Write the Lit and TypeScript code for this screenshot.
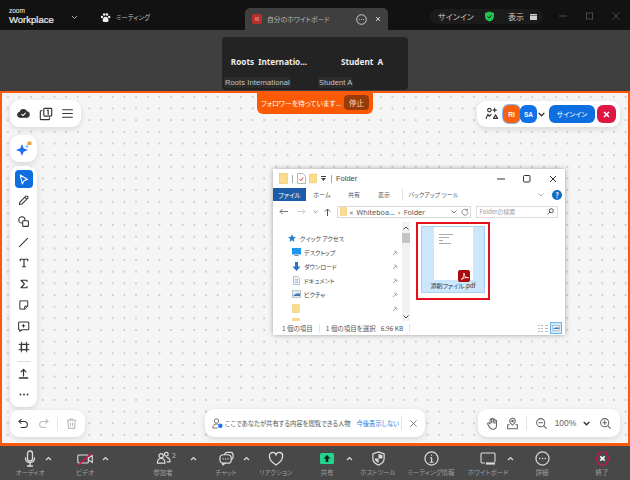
import { LitElement, html, css, svg } from "lit";
import { customElement } from "lit/decorators.js";

const ic = (body: unknown, w = 16, h = 16, vb = "0 0 16 16") =>
  html`<svg width=${w} height=${h} viewBox=${vb} fill="none" stroke="currentColor" stroke-width="1.3" stroke-linecap="round" stroke-linejoin="round">${body}</svg>`;

const folder = (w = 9, h = 11) =>
  html`<svg width=${w} height=${h} viewBox="0 0 9 11"><rect x="0.5" y="0.5" width="8" height="10" fill="#fbdc8c" stroke="#e8c264" stroke-width="0.6"/></svg>`;

const bottom = [
  { label: "オーディオ", gap: 15, w: 30, icon: ic(svg`<rect x="4.500" y="1" width="5" height="10" rx="2.500"/><path d="M2.500 8c0 3 2 4.500 4.500 4.500S11.500 11 11.500 8M7 12.500v3M4.500 16h5"/>`, 14, 17, "0 0 14 17") },
  { label: "ビデオ", gap: 25, w: 30, icon: html`<svg width="17" height="14" viewBox="0 0 17 14" fill="none" stroke="currentColor" stroke-width="1.100"><rect x=".8" y="3" width="10.500" height="8" rx="1"/><path d="M11.500 6l3.800-2.500v7L11.500 8z"/><path d="M1.500 13L15 1" stroke="#e0104f" stroke-width="1.500"/></svg>` },
  { label: "参加者", gap: 45.5, w: 35, icon: ic(svg`<circle cx="5.500" cy="5" r="2.300"/><circle cx="11" cy="3.500" r="2"/><path d="M1.500 13c0-3 1.500-5 4-5s4 2 4 5zM11.500 7c2 0 3.500 1.500 3.500 4.500h-3"/>`, 15, 15) },
  { label: "チャット", gap: 30.5, w: 30, icon: ic(svg`<path d="M6 3.500A3 3 0 0 1 9 1.500h3.500a2.500 2.500 0 0 1 2.500 2.500v2.500A2.500 2.500 0 0 1 13.500 9"/><rect x="1" y="4" width="12" height="9" rx="3.500"/><path d="M4 13v2l2.500-2"/><path d="M4.500 8.500h.1M7 8.500h.1M9.500 8.500h.1"/>`, 15, 15) },
  { label: "リアクション", gap: 17, w: 36, icon: ic(svg`<path d="M8 14S1.500 10 1.500 5.500A3.300 3.300 0 0 1 8 4a3.300 3.300 0 0 1 6.500 1.500C14.500 10 8 14 8 14z"/>`, 16, 16) },
  { label: "共有", gap: 26, w: 14, icon: html`<svg width="14" height="11" viewBox="0 0 14 11"><rect width="14" height="11" rx="1.500" fill="#22d48b"/><path d="M7 2l3.500 3.500H8.300V9H5.700V5.500H3.500z" fill="#10231b"/></svg>` },
  { label: "ホストツール", gap: 26, w: 36, icon: ic(svg`<path d="M8 1l6 2v5c0 3.500-3 5.800-6 7-3-1.200-6-3.500-6-7V3z"/><path d="M8 3v5H3.800c.2 2 2 3.700 4.200 4.700V8h4.200V4.500z" fill="currentColor" stroke="none"/>`, 15, 15) },
  { label: "ミーティング情報", gap: 11, w: 48, icon: ic(svg`<circle cx="8" cy="8" r="7"/><path d="M8 4.500h.1M7 7.200h1.100V12M6.500 12h3.200"/>`, 15, 15) },
  { label: "ホワイトボード", gap: 12, w: 42, icon: html`<svg width="16" height="14" viewBox="0 0 16 14" fill="none" stroke="currentColor" stroke-width="1.100"><path d="M5 11H2a1 1 0 0 1-1-1V2a1 1 0 0 1 1-1h12a1 1 0 0 1 1 1v8"/><path d="M6 11.500h9" stroke-width="2.200"/></svg>` },
  { label: "詳細", gap: 24, w: 18, icon: ic(svg`<circle cx="8" cy="8" r="7"/><path d="M5 8h.1M8 8h.1M11 8h.1" stroke-width="1.600"/>`, 15, 15) },
  { label: "終了", gap: 42, w: 18, icon: html`<svg width="15" height="15" viewBox="0 0 15 15" fill="none"><path d="M4.500 1h6l3.500 6.500-3.500 6.500h-6L1 7.500z" stroke="#d8104e" stroke-width="1.200"/><path d="M5.300 5.300l4.400 4.400M9.700 5.300l-4.400 4.400" stroke="#f2f2f2" stroke-width="1.800"/></svg>` },
];
const carets = [45, 102, 190, 243, 346, 507];
const tabs = [["ホーム", 32], ["共有", 32], ["表示", 28], ["バックアップ ツール", 62]] as const;

@customElement("app-root")
export class AppRoot extends LitElement {
  static styles = css`
    :host { display: block; width: 630px; height: 480px; overflow: hidden; background: #3f3f3f; font-family: "Noto Sans CJK JP", "Liberation Sans", sans-serif; font-feature-settings: "palt"; color: #fff; }
    * { box-sizing: border-box; }
    svg { display: block; flex: none; }
    .top { height: 30px; background: #121212; display: flex; align-items: flex-start; position: relative; }
    .brand { width: 62px; margin-left: 9px; padding-top: 8px; display: flex; flex-direction: column; font-family: "Liberation Sans", sans-serif; }
    .brand b { font-size: 6.500px; font-weight: 400; line-height: 6px; }
    .brand span { font-size: 9.500px; line-height: 11px; color: #f0f0f0; -webkit-text-stroke: .2px #f0f0f0; }
    .chev { margin-top: 15px; color: #aaa; }
    .meet { margin: 12px 0 0 22px; display: flex; gap: 5px; align-items: center; font-size: 6.500px; color: #c0c0c0; line-height: 11px; }
    .tab { position: absolute; left: 245px; top: 8px; width: 143px; height: 22px; background: #3f3f3f; border-radius: 5px 5px 0 0; display: flex; align-items: center; padding: 0 7px; font-size: 6.800px; color: #b5b5b5; }
    .avatar-s { width: 10px; height: 10px; background: #b8302c; border-radius: 2px; font-size: 4.500px; display: grid; place-items: center; color: #f2c0c0; margin-right: 5px; }
    .tab .t { flex: 1; white-space: nowrap; }
    .tab .more { margin-right: 8px; color: #ccc; }
    .right { position: absolute; left: 430px; top: 9px; width: 113px; height: 15px; background: #1b1b1b; border-radius: 8px; display: flex; align-items: center; padding-left: 8px; font-size: 8px; color: #ccc; }
    .right .si { width: 46px; }
    .right .sh { width: 24px; }
    .right .hy { width: 22px; }
    .wc { position: absolute; left: 559px; top: 12px; display: flex; gap: 19px; color: #4a4a4a; }
    .mid { height: 61px; display: flex; justify-content: center; }
    .tiles { margin-top: 7px; width: 186px; height: 53px; background: #232323; border-radius: 4px; display: grid; grid-template-columns: 94px 92px; }
    .tile { display: flex; flex-direction: column; justify-content: space-between; align-items: center; padding: 19px 0 2px; font-weight: 700; font-size: 8.200px; line-height: 12px; color: #eee; font-family: "Noto Sans", sans-serif; word-spacing: 2px; white-space: nowrap; }
    .tile i { font-style: normal; font-weight: 400; font-size: 7.500px; background: #2c2c2c; color: #c4c4c4; align-self: flex-start; margin-left: 2px; padding: 0 1px; line-height: 11px; border-radius: 2px; font-family: "Liberation Sans", sans-serif; word-spacing: 0; letter-spacing: .1px; }
    .board { position: relative; height: 355px; border: 2px solid #fb5a0c; border-bottom-width: 3px; background-color: #f5f5f5; background-image: radial-gradient(circle, #cfcfcf .7px, transparent 1px); background-size: 11.670px 11.670px; background-position: 0 -2px; overflow: hidden; }
    .float { position: absolute; background: #fff; border-radius: 9px; box-shadow: 0 2px 6px rgba(0,0,0,.12); display: flex; align-items: center; color: #333; }
    .follow { position: absolute; left: 255px; top: -2px; width: 116px; height: 23px; background: #fb5a05; border-radius: 0 0 6px 6px; display: flex; align-items: center; padding: 0 4px; font-size: 6.900px; color: #fff; justify-content: space-between; white-space: nowrap; }
    .follow b { font-weight: 400; font-size: 7.500px; background: #9a3a08; border-radius: 4px; width: 25px; height: 15px; display: grid; place-items: center; color: #f6d5c0; }
    .tl { left: 8px; top: 7px; width: 71px; height: 27px; padding: 0 7px; justify-content: space-between; }
    .tr { left: 475px; top: 8px; width: 143px; height: 26px; padding: 0 4px 0 8px; }
    .chip { width: 17px; height: 18px; border-radius: 6px; font-size: 6.500px; font-weight: 700; display: grid; place-items: center; color: #fff; font-family: "Liberation Sans", sans-serif; }
    .ri { background: #f9600f; box-shadow: 0 0 0 1px #7fb6f5; margin-left: 4px; }
    .sa { background: #0e71e8; }
    .drop { margin: 0 4px 0 1px; }
    .signin { width: 46px; height: 18px; border-radius: 6px; background: #0e6ee0; display: grid; place-items: center; font-size: 6.800px; color: #fff; }
    .close { width: 19px; height: 18px; border-radius: 6px; background: #df1542; display: grid; place-items: center; margin-left: 2px; color: #fff; }
    .ai { left: 8px; top: 42px; width: 27px; height: 27px; justify-content: center; }
    .tools { left: 8px; top: 73px; width: 27px; height: 241px; flex-direction: column; padding-top: 2.500px; }
    .tool { width: 27px; height: 21px; display: grid; place-items: center; flex: none; color: #333; }
    .tool.on span { width: 18px; height: 18px; background: #0e6ee0; border-radius: 4px; display: grid; place-items: center; color: #fff; }
    .sep { width: 14px; height: 1px; background: #ddd; margin: 3.500px 0 1px; flex: none; }
    .undo { left: 8px; top: 317px; width: 75px; height: 27px; padding: 0 7px; color: #333; }
    .undo .d { color: #bbb; }
    .undo .r { margin-left: 7px; }
    .undo .vs { margin: 0 7px 0 7px; }
    .vs { width: 1px; height: 14px; background: #e4e4e4; flex: none; }
    .notice { left: 203px; top: 316px; width: 220px; height: 28px; padding: 0 7px; font-size: 6.300px; color: #555; white-space: nowrap; }
    .notice .who { margin-right: 2px; }
    .notice em { font-style: normal; color: #2f80e0; margin-left: 6px; }
    .notice .vs { margin: 0 7px 0 auto; }
    .zoombar { left: 476px; top: 316px; width: 142px; height: 28px; padding: 0 8px; font-size: 8px; color: #666; }
    .zoombar .pin2 { margin-left: 7px; }
    .zoombar .vs { margin: 0 8px 0 7px; }
    .zoombar .pct { width: 38px; text-align: center; font-family: "Liberation Sans", sans-serif; font-size: 8.500px; }
    .zoombar .drop2 { margin: 0 9px 0 0; }
    .win { position: absolute; left: 271px; top: 76px; width: 292px; height: 166px; background: #fff; box-shadow: 0 0 5px rgba(0,0,0,.35); display: flex; flex-direction: column; color: #444; font-size: 7px; }
    .title { height: 19px; flex: none; display: flex; align-items: center; padding-left: 6px; gap: 3px; font-size: 7.500px; font-family: "Liberation Sans", sans-serif; }
    .title .pipe { width: 1px; height: 8px; background: #aaa; margin: 0 1px; }
    .winbtns { margin-left: auto; display: flex; gap: 18px; padding-right: 8px; color: #333; }
    .ribbon { height: 13px; flex: none; display: flex; align-items: stretch; font-size: 6px; color: #555; }
    .ribbon .file { width: 33px; background: #1b5da8; color: #fff; display: grid; place-items: center; font-size: 6.500px; }
    .ribbon span { display: grid; place-items: center; white-space: nowrap; }
    .ribbon span:last-of-type { border-left: 1px solid #e5e5e5; margin-left: 4px; }
    .help { margin-left: auto; margin-right: 3px; display: flex; align-items: center; gap: 8px; color: #999; }
    .help b { width: 10px; height: 10px; border-radius: 50%; background: #0f6cc4; color: #fff; font-size: 7px; display: grid; place-items: center; }
    .addr { height: 21px; flex: none; display: flex; align-items: center; padding: 0 6px; color: #777; }
    .addr .fw { margin-left: 9px; }
    .addr .cr { margin-left: 6.500px; }
    .addr .up { margin-left: 6px; }
    .path { width: 134px; height: 12px; border: 1px solid #d9d9d9; display: flex; align-items: center; padding-left: 2px; gap: 3px; font-size: 7.200px; color: #555; margin-left: 6px; white-space: nowrap; font-family: "Noto Sans", sans-serif; word-spacing: 1.500px; }
    .path .dn { margin-left: auto; }
    .path .rf { margin: 0 1px; }
    .search { margin-left: 5px; width: 82px; height: 12px; border: 1px solid #ddd; display: flex; align-items: center; justify-content: space-between; padding: 0 3px; font-size: 6px; color: #999; white-space: nowrap; }
    .body { flex: 1; display: flex; min-height: 0; }
    .nav { width: 129px; flex: none; padding: 9px 0 0 5px; display: flex; flex-direction: column; overflow: hidden; }
    .nav div { height: 14px; flex: none; display: flex; align-items: center; gap: 3px; padding-left: 14px; font-size: 6px; color: #444; white-space: nowrap; }
    .nav div.q { padding-left: 10px; gap: 4px; }
    .nav .pin { margin-left: auto; margin-right: 3px; color: #999; }
    .sb { width: 8px; flex: none; background: #f1f1f1; display: flex; flex-direction: column; align-items: center; }
    .sb .up { margin-top: 4px; }
    .sb i { display: block; width: 8px; height: 10px; background: #c4c4c4; margin-top: 3px; }
    .sb .dn { margin-top: auto; margin-bottom: 2px; }
    .content { flex: 1; padding-left: 6px; }
    .red { width: 74px; height: 78px; border: 2px solid #e3101e; padding: 2px 3px 5px; }
    .sel { height: 67px; background: #cce6fb; border: 1px solid #a9d3f5; display: flex; flex-direction: column; align-items: center; position: relative; color: #333; font-size: 6.200px; line-height: 12px; white-space: nowrap; }
    .page { width: 39px; height: 54px; background: #fff; padding: 7px 0 0 5px; display: flex; flex-direction: column; gap: 2px; }
    .page i { display: block; height: 1px; background: #aaa; }
    .pdf { position: absolute; left: 36px; top: 43px; width: 12px; height: 12px; background: #a80c0c; border-radius: 2px; display: grid; place-items: center; }
    .status { height: 14px; flex: none; display: flex; align-items: center; padding-left: 9px; font-size: 6.500px; color: #555; white-space: nowrap; }
    .status .v { width: 1px; height: 9px; background: #e5e5e5; margin: 0 6px; }
    .status .kb { margin-left: 5px; }
    .status .vw { margin-left: auto; margin-right: 3px; display: flex; gap: 2px; align-items: center; }
    .bar { height: 34px; background: #484848; display: flex; position: relative; }
    .it { display: flex; flex-direction: column; align-items: center; flex: none; padding-top: 4px; font-size: 6.500px; color: #9f9f9f; white-space: nowrap; }
    .it .g { height: 17px; display: grid; place-items: center; color: #dcdcdc; }
    .it span { line-height: 10px; }
    .car { position: absolute; top: 10px; color: #ddd; }
    .num { position: absolute; left: 172px; top: 5px; font-size: 7px; line-height: 9px; color: #bbb; }
  `;

  private pin() {
    return html`<svg class="pin" width="7" height="7" viewBox="0 0 7 7" fill="none" stroke="currentColor" stroke-width="1"><path d="M1 6l2-2M2.500 2.500l2 2M3 1.500l2.500 2.500"/></svg>`;
  }

  render() {
    return html`
      <div class="top">
        <div class="brand"><b>zoom</b><span>Workplace</span></div>
        <svg class="chev" width="7" height="5" viewBox="0 0 7 5" fill="none" stroke="currentColor"><path d="M1 1l2.500 2.500L6 1"/></svg>
        <div class="meet">
          <svg width="11" height="11" viewBox="0 0 11 11" fill="#f0f0f0"><circle cx="2" cy="5" r="1.200"/><circle cx="4.200" cy="2.500" r="1.300"/><circle cx="7" cy="2.500" r="1.300"/><circle cx="9.200" cy="5" r="1.200"/><path d="M5.600 4.800c2 0 3 2.200 3 3.700 0 1.200-1 1.500-3 1.500s-3-.3-3-1.500c0-1.500 1-3.700 3-3.700z"/></svg>
          ミーティング
        </div>
        <div class="tab">
          <div class="avatar-s">RI</div><div class="t">自分のホワイトボード</div>
          <svg class="more" width="11" height="11" viewBox="0 0 11 11" fill="none" stroke="currentColor"><circle cx="5.500" cy="5.500" r="4.800"/><path d="M3 5.500h.8M5.100 5.500h.8M7.200 5.500h.8"/></svg>
          <svg width="6" height="6" viewBox="0 0 6 6" stroke="#ccc" stroke-width="1"><path d="M1 1l4 4M5 1l-4 4"/></svg>
        </div>
        <div class="right">
          <span class="si">サインイン</span>
          <span class="sh"><svg width="11" height="11" viewBox="0 0 11 11"><path d="M5.500.5l4.500 1.500v3.500c0 2.500-2 4.200-4.500 5-2.500-.8-4.500-2.500-4.500-5V2z" fill="#23c552"/><path d="M3.500 5.500l1.500 1.500 2.500-2.800" stroke="#111" fill="none"/></svg></span>
          <span class="hy">表示</span>
          <svg width="7" height="6" viewBox="0 0 7 6" fill="#cfcfcf"><rect width="7" height="1.500"/><rect y="2" width="7" height="4"/></svg>
        </div>
        <div class="wc">
          <svg width="8" height="8" viewBox="0 0 8 8" stroke="currentColor"><path d="M0 4h8"/></svg>
          <svg width="7" height="8" viewBox="0 0 7 8" fill="none" stroke="currentColor"><rect x=".5" y="1" width="6" height="6"/></svg>
          <svg width="8" height="8" viewBox="0 0 8 8" stroke="currentColor"><path d="M.5.500l7 7M7.500.500l-7 7"/></svg>
        </div>
      </div>
      <div class="mid">
        <div class="tiles">
          <div class="tile">Roots Internatio...<i>Roots International</i></div>
          <div class="tile">Student A<i>Student A</i></div>
        </div>
      </div>
      <div class="board">
        <div class="follow"><span>フォロワーを待っています...</span><b>停止</b></div>

        <div class="float tl">
          ${ic(svg`<path d="M4 12.500a3 3 0 0 1-.3-6 4.500 4.500 0 0 1 8.500-.5 3.300 3.300 0 0 1 .2 6.500z" fill="#333"/><path d="M5.800 9l1.500 1.500 3-3" stroke="#fff"/>`, 13, 13)}
          ${ic(svg`<rect x="5.500" y="1.500" width="9" height="9" rx="1"/><path d="M3.500 4H2.800a1.300 1.300 0 0 0-1.300 1.300v8a1.200 1.200 0 0 0 1.200 1.200h8a1.300 1.300 0 0 0 1.300-1.300v-.7" /><path d="M9.500 4l1-.5v5"/>`, 14, 14)}
          ${ic(svg`<path d="M2 3.500h12M2 8h12M2 12.500h12"/>`, 13, 13)}
        </div>

        <div class="float tr">
          ${ic(svg`<circle cx="5" cy="3.500" r="2"/><path d="M1.500 13a3.200 3.200 0 0 1 3.200-3.500M9 3.500h4M11 1.500v4M9.800 13l2.200-4 2.500 4zM3 8.500l2 2 2-2"/>`, 14, 14)}
          <div class="chip ri">RI</div>
          <div class="chip sa">SA</div>
          <svg class="drop" width="7" height="5" viewBox="0 0 7 5" fill="none" stroke="#333" stroke-width="1.300"><path d="M.7 1l2.800 2.800L6.300 1"/></svg>
          <div class="signin">サインイン</div>
          <div class="close"><svg width="7" height="7" viewBox="0 0 7 7" stroke="currentColor" stroke-width="1.600"><path d="M1 1l5 5M6 1l-5 5"/></svg></div>
        </div>

        <div class="float ai">
          <svg width="18" height="18" viewBox="0 0 18 18"><path d="M7 4l1.600 4.300L13 10l-4.400 1.700L7 16l-1.700-4.300L1 10l4.300-1.700z" fill="#1f6df0"/><path d="M12 4l.7 1.700 1.600.7-1.600.6L12 8.700l-.7-1.700-1.600-.6 1.600-.7z" fill="#8ab4f8"/><rect x="12.500" y="1.500" width="4" height="3.500" rx=".6" fill="#e8a33d"/></svg>
        </div>

        <div class="float tools">
          <div class="tool on"><span>${ic(svg`<path d="M4 2.500l9 5.500-4.200 1.200L6.500 13.500z"/>`, 13, 13)}</span></div>
          <div class="tool">${ic(svg`<path d="M3 13l.6-3 7-7a1.400 1.400 0 0 1 2.400 2.400l-7 7zM9.500 4l2.500 2.500"/>`, 13, 13)}</div>
          <div class="tool">${ic(svg`<circle cx="6" cy="6" r="3.800"/><rect x="7" y="7" width="7" height="7" rx=".8" fill="#fff"/>`, 13, 13)}</div>
          <div class="tool">${ic(svg`<path d="M3 13L13 3"/>`, 13, 13)}</div>
          <div class="tool">${ic(svg`<path d="M3 5V3h10v2M8 3v10M6 13h4" stroke-width="1.600"/>`, 12, 12)}</div>
          <div class="tool">${ic(svg`<path d="M12 4.500V3H4l4.500 5L4 13h8v-1.500" stroke-width="1.500"/>`, 12, 12)}</div>
          <div class="tool">${ic(svg`<path d="M3 2.500h10v7l-4 4H3zM13 9.500H9v4"/>`, 12, 12)}</div>
          <div class="tool">${ic(svg`<path d="M3 2.500h10.500a1 1 0 0 1 1 1v7.500a1 1 0 0 1-1 1H6l-2.500 2v-2H3a1 1 0 0 1-1-1V3.500a1 1 0 0 1 1-1zM6.500 7h3M8 5.500v3"/>`, 13, 13)}</div>
          <div class="tool">${ic(svg`<path d="M4.500 1.500v13M11.500 1.500v13M1.500 4.500h13M1.500 11.500h13" /><rect x="4.500" y="4.500" width="7" height="7" stroke-width="1.800"/>`, 12, 12)}</div>
          <div class="sep"></div>
          <div class="tool">${ic(svg`<path d="M8 11V3M5 6l3-3 3 3" stroke-width="1.500"/><path d="M3 13.500h10" stroke-width="2"/>`, 13, 13)}</div>
          <div class="tool"><svg width="10" height="3" viewBox="0 0 10 3" fill="#333"><circle cx="1.500" cy="1.500" r=".9"/><circle cx="5" cy="1.500" r=".9"/><circle cx="8.500" cy="1.500" r=".9"/></svg></div>
        </div>

        <div class="float undo">
          ${ic(svg`<path d="M5 3L2.500 5.500 5 8"/><path d="M2.500 5.500H9a3.700 3.700 0 0 1 0 7.500H5"/>`, 13, 13)}
          <span class="d r">${ic(svg`<path d="M11 3l2.500 2.500L11 8"/><path d="M13.500 5.500H7a3.700 3.700 0 0 0 0 7.500h4"/>`, 13, 13)}</span>
          <div class="vs"></div>
          <span class="d">${ic(svg`<path d="M2.500 4h11M6 4V2.500h4V4M3.500 4l.7 10h7.600l.7-10M6.500 7v4M9.500 7v4"/>`, 13, 13)}</span>
        </div>

        <div class="float notice">
          <svg class="who" width="11" height="11" viewBox="0 0 11 11" fill="none" stroke="#555" stroke-width=".8"><circle cx="4.500" cy="3" r="2.200"/><path d="M.8 10c0-2.500 1.600-4 3.700-4 .5 0 1 .1 1.400.3M.8 10h5"/><circle cx="8.300" cy="7.800" r="2.300" fill="#1d73e8" stroke="none"/></svg>
          <span>ここであなたが共有する内容を閲覧できる人物</span><em>今後表示しない</em>
          <div class="vs"></div>
          ${ic(svg`<path d="M3 3l10 10M13 3L3 13"/>`, 9, 9)}
        </div>

        <div class="float zoombar">
          ${ic(svg`<path d="M5 8.500V3.500a1 1 0 0 1 2 0V7V2.500a1 1 0 0 1 2 0V7V3.500a1 1 0 0 1 2 0V8V5a1 1 0 0 1 2 0v5c0 3-2 5-4.500 5S4.500 13.500 3 10.500L2 8.500c-.4-1 1-2 2-.8z"/>`, 13, 13)}
          <span class="pin2">${ic(svg`<path d="M8 1.500a3.500 3.500 0 0 1 3.500 3.500C11.500 7.500 8 10 8 10S4.500 7.500 4.500 5A3.500 3.500 0 0 1 8 1.500zM4 9.500H2v5h12v-5h-2"/><circle cx="8" cy="5" r="1" fill="currentColor"/>`, 13, 13)}</span>
          <div class="vs"></div>
          ${ic(svg`<circle cx="7" cy="7" r="5"/><path d="M4.800 7h4.400M11 11l3 3" />`, 13, 13)}
          <span class="pct">100%</span>
          <svg class="drop2" width="7" height="5" viewBox="0 0 7 5" fill="none" stroke="#333" stroke-width="1.300"><path d="M.7 1l2.800 2.800L6.300 1"/></svg>
          ${ic(svg`<circle cx="7" cy="7" r="5"/><path d="M4.800 7h4.400M7 4.800v4.400M11 11l3 3"/>`, 13, 13)}
        </div>

        <div class="win">
          <div class="title">
            ${folder()}
            <div class="pipe"></div>
            <svg width="9" height="11" viewBox="0 0 9 11"><path d="M.5.500h5.500l2.500 2.500v7.500h-8z" fill="#fff" stroke="#999" stroke-width=".7"/><path d="M2.500 6l1.300 1.500 2.500-3" stroke="#d2402a" fill="none"/></svg>
            ${folder(8, 11)}
            <svg width="7" height="7" viewBox="0 0 7 7" fill="#444"><path d="M1 1h5v1H1zM1 3h5L3.500 6z"/></svg>
            <div class="pipe"></div>
            <span>Folder</span>
            <div class="winbtns">
              <svg width="8" height="8" viewBox="0 0 8 8" stroke="currentColor"><path d="M0 4h8"/></svg>
              <svg width="8" height="8" viewBox="0 0 8 8" fill="none" stroke="currentColor"><rect x=".5" y=".5" width="6.500" height="6.500" rx="1"/></svg>
              <svg width="8" height="8" viewBox="0 0 8 8" stroke="currentColor"><path d="M1 1l6 6M7 1L1 7"/></svg>
            </div>
          </div>
          <div class="ribbon">
            <div class="file">ファイル</div>
            ${tabs.map(([t, w]) => html`<span style="width:${w}px">${t}</span>`)}
            <div class="help"><svg width="6" height="4" viewBox="0 0 6 4" fill="none" stroke="currentColor" stroke-width=".8"><path d="M.5.500L3 3 5.500.5"/></svg><b>?</b></div>
          </div>
          <div class="addr">
            <svg width="9" height="7" viewBox="0 0 9 7" fill="none" stroke="#777"><path d="M9 3.500H1M3.500 1L1 3.500 3.500 6"/></svg>
            <svg class="fw" width="9" height="7" viewBox="0 0 9 7" fill="none" stroke="#ccc"><path d="M0 3.500h8M5.500 1L8 3.500 5.500 6"/></svg>
            <svg class="cr" width="5" height="4" viewBox="0 0 5 4" fill="none" stroke="#888" stroke-width=".8"><path d="M.5.500L2.500 3l2-2.500"/></svg>
            <svg class="up" width="7" height="8" viewBox="0 0 7 8" fill="none" stroke="#555"><path d="M3.500 8V1M1 3.500L3.500 1 6 3.500"/></svg>
            <div class="path">${folder(7, 9)}<span>« Whiteboa... › Folder</span>
              <svg class="dn" width="6" height="4" viewBox="0 0 6 4" fill="none" stroke="#555" stroke-width=".8"><path d="M.5.500L3 3 5.500.5"/></svg>
              <svg class="rf" width="8" height="8" viewBox="0 0 8 8" fill="none" stroke="#777" stroke-width=".8"><path d="M6.500 2.500A3 3 0 1 0 7 4M6.500.8v1.900H4.700"/></svg>
            </div>
            <div class="search"><span>Folderの検索</span><svg width="7" height="7" viewBox="0 0 7 7" fill="none" stroke="#444" stroke-width=".9"><circle cx="4.300" cy="2.700" r="2"/><path d="M3 4L.8 6.300"/></svg></div>
          </div>
          <div class="body">
            <div class="nav">
              <div class="q"><svg width="8" height="8" viewBox="0 0 8 8" fill="#2d7fd3"><path d="M4 0l1.100 2.700L8 3 5.800 4.900 6.500 8 4 6.300 1.500 8l.7-3.100L0 3l2.900-.3z"/></svg>クイック アクセス</div>
              <div><svg width="9" height="8" viewBox="0 0 9 8"><rect width="9" height="6.500" fill="#1c97ea"/><rect x="2.500" y="7" width="4" height="1" fill="#888"/></svg>デスクトップ${this.pin()}</div>
              <div><svg width="9" height="9" viewBox="0 0 9 9" fill="#2b73c8"><path d="M3 0h3v4.500h2.500L4.500 9 .5 4.500H3z"/></svg>ダウンロード${this.pin()}</div>
              <div><svg width="9" height="9" viewBox="0 0 9 9"><path d="M1.500.5h4l2 2v6h-6z" fill="#f5f7fa" stroke="#8a9aa8" stroke-width=".6"/><path d="M3 3.500h3M3 5h3M3 6.500h3" stroke="#5da0d8" stroke-width=".6"/></svg>ドキュメント${this.pin()}</div>
              <div><svg width="9" height="8" viewBox="0 0 9 8"><rect x=".3" y=".8" width="8.400" height="6.400" fill="#e9eef3" stroke="#8a9aa8" stroke-width=".6"/><path d="M1 6l3-2.500H8V6z" fill="#3f78b5"/></svg>ピクチャ${this.pin()}</div>
              <div>${folder(8, 9)}${this.pin()}</div>
              <div>${folder(8, 9)}</div>
            </div>
            <div class="sb">
              <svg class="up" width="6" height="4" viewBox="0 0 6 4" fill="none" stroke="#444"><path d="M.5 3.500L3 1l2.500 2.500"/></svg>
              <i></i>
              <svg class="dn" width="6" height="4" viewBox="0 0 6 4" fill="none" stroke="#444"><path d="M.5.500L3 3l2.500-2.500"/></svg>
            </div>
            <div class="content">
              <div class="red">
                <div class="sel">
                  <div class="page"><i style="width:14px"></i><i style="width:10px"></i><i style="width:4px"></i><i style="width:12px"></i></div>
                  <div class="pdf"><svg width="9" height="9" viewBox="0 0 9 9" fill="none" stroke="#fff" stroke-width=".9"><path d="M1 7.500C3 6.500 4.500 3.500 4.300 1.500c-.2-.8-.8-.5-.6.500.4 2 2 3.800 4.300 4 .6 0 .6-.6 0-.6-2-.1-5 .6-6.500 2.300"/></svg></div>
                  <span>添削ファイル.pdf</span>
                </div>
              </div>
            </div>
          </div>
          <div class="status">
            <span>1 個の項目</span><div class="v"></div><span>1 個の項目を選択</span><span class="kb">6.96 KB</span><div class="v"></div>
            <div class="vw">
              <svg width="10" height="9" viewBox="0 0 10 9" fill="#bbb"><path d="M0 1h2v1H0zM3 1h2v1H3zM7 1h3v1H7zM0 4h2v1H0zM3 4h2v1H3zM7 4h3v1H7zM0 7h2v1H0zM3 7h2v1H3zM7 7h3v1H7z"/></svg>
              <svg width="12" height="12" viewBox="0 0 12 12"><rect x=".5" y=".5" width="11" height="11" fill="#cfe8fb" stroke="#6db7ee"/><rect x="2.500" y="3.500" width="7" height="5" fill="#f3f3f3" stroke="#8a9aa8" stroke-width=".5"/><path d="M3 7l2-1.500h4V7z" fill="#3f78b5"/></svg>
            </div>
          </div>
        </div>
      </div>
      <div class="bar">
        ${bottom.map(b => html`<div class="it" style="margin-left:${b.gap}px;width:${b.w}px"><div class="g">${b.icon}</div><span>${b.label}</span></div>`)}
        ${carets.map(c => html`<svg class="car" style="left:${c}px" width="7" height="5" viewBox="0 0 7 5" fill="none" stroke="currentColor" stroke-width="1.200"><path d="M1 4l2.500-2.500L6 4"/></svg>`)}
        <span class="num">2</span>
      </div>
    `;
  }
}
